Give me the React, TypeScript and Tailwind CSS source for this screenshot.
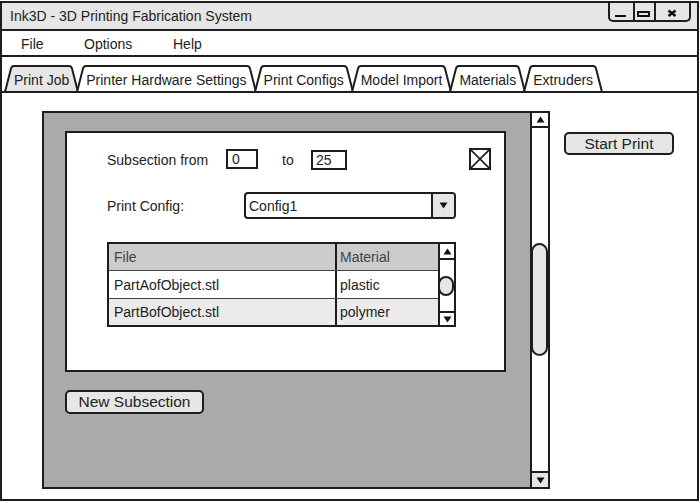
import React from 'react';

function Tab({ label, active, first }: { label: string; active?: boolean; first?: boolean }) {
  const fill = active ? '#e6e6e6' : '#ffffff';
  return (
    <div className={`flex h-[26px] ${first ? '' : '-ml-[3px]'}`}>
      <svg width="10" height="26" viewBox="0 0 10 26" className="shrink-0">
        <path d="M1 27 L7 3.5 Q7.8 1 10 1 L10 26 Z" fill={fill} />
        <path d="M1 27 L7 3.5 Q7.8 1 10 1" fill="none" stroke="#1d1d1d" strokeWidth="2" />
      </svg>
      <div
        className={`flex items-center border-t-2 border-[#1d1d1d] pt-[1px] text-[14px] leading-none ${
          active ? 'bg-[#e6e6e6]' : 'bg-white'
        }`}
      >
        {label}
      </div>
      <svg width="10" height="26" viewBox="0 0 10 26" className="shrink-0">
        <path d="M9 27 L3 3.5 Q2.2 1 0 1 L0 26 Z" fill={fill} />
        <path d="M9 27 L3 3.5 Q2.2 1 0 1" fill="none" stroke="#1d1d1d" strokeWidth="2" />
      </svg>
    </div>
  );
}

function Arrow({ up }: { up?: boolean }) {
  return (
    <svg width="9" height="7" viewBox="0 0 9 7">
      <path d={up ? 'M0.5 6.5 L4.5 0.5 L8.5 6.5 Z' : 'M0.5 0.5 L8.5 0.5 L4.5 6.5 Z'} fill="#111" />
    </svg>
  );
}

export default function App() {
  const tabs = ['Print Job', 'Printer Hardware Settings', 'Print Configs', 'Model Import', 'Materials', 'Extruders'];

  return (
    <div className="w-[700px] h-[503px] overflow-hidden bg-white font-['Liberation_Sans',Arial,sans-serif] text-[#222]">
      <div className="mt-[1px] flex h-[500px] w-[699px] flex-col border-2 border-[#1d1d1d]">
        {/* Title bar */}
        <div className="flex h-[28px] shrink-0 justify-between border-b-2 border-[#1d1d1d] bg-[#e6e6e6]">
          <span className="self-center pl-[8px] text-[14px] leading-none">Ink3D - 3D Printing Fabrication System</span>
          <div className="mr-[6px] flex h-[19px] w-[83px] rounded-b-[5px] border-x-2 border-b-2 border-[#1d1d1d]">
            <div className="w-[23px]">
              <svg width="23" height="17" viewBox="0 0 23 17">
                <rect x="5" y="12" width="11" height="2" fill="#111" />
              </svg>
            </div>
            <div className="w-[21px] border-l-2 border-[#1d1d1d]">
              <svg width="19" height="17" viewBox="0 0 19 17">
                <rect x="3" y="9" width="11" height="4" fill="none" stroke="#111" strokeWidth="2" />
              </svg>
            </div>
            <div className="flex-1 border-l-2 border-[#1d1d1d]">
              <svg width="33" height="17" viewBox="0 0 33 17">
                <path d="M12.5 7.5 L19.5 13 M19.5 7.5 L12.5 13" stroke="#111" strokeWidth="2.6" />
              </svg>
            </div>
          </div>
        </div>

        {/* Menu bar */}
        <div className="flex h-[26px] shrink-0 items-center border-b-2 border-[#1d1d1d] pl-[19px] pt-[1px] text-[14px] leading-none">
          <span className="w-[63px]">File</span>
          <span className="w-[89px]">Options</span>
          <span>Help</span>
        </div>

        {/* Tabs */}
        <div className="flex h-[36px] shrink-0 items-end border-b-2 border-[#1d1d1d] pl-[2px]">
          {tabs.map((t, i) => (
            <Tab key={t} label={t} active={i === 0} first={i === 0} />
          ))}
        </div>

        {/* Content */}
        <div className="flex flex-1 items-start pl-[40px] pt-[18px]">
          <div className="flex h-[378px] w-[508px] border-2 border-[#1d1d1d]">
            <div className="flex-1 bg-[#aaaaaa] pl-[21px] pt-[18px]">
              <div className="h-[241px] w-[441px] border-2 border-[#1d1d1d] bg-white pl-[40px] pt-[15px] text-[14px] leading-none">
                {/* Subsection row */}
                <div className="flex h-[22px] items-center">
                  <span className="w-[119px] pt-[2px]">Subsection from</span>
                  <div className="flex h-[20px] w-[32px] items-center border-2 border-[#1d1d1d] pl-[4px]">0</div>
                  <span className="ml-[24px] w-[29px] pt-[2px]">to</span>
                  <div className="mt-[2px] flex h-[20px] w-[36px] items-center border-2 border-[#1d1d1d] pl-[3px]">25</div>
                  <div className="ml-[122px] h-[22px] w-[22px] border-2 border-[#1d1d1d]">
                    <svg width="18" height="18" viewBox="0 0 18 18">
                      <path d="M0 0 L18 18 M18 0 L0 18" stroke="#1d1d1d" strokeWidth="1.6" />
                    </svg>
                  </div>
                </div>

                {/* Print config row */}
                <div className="mt-[22px] flex items-center">
                  <span className="w-[137px]">Print Config:</span>
                  <div className="flex h-[27px] w-[212px] rounded-[4px] border-2 border-[#1d1d1d]">
                    <span className="flex flex-1 items-center pl-[3px]">Config1</span>
                    <div className="flex w-[23px] items-center justify-center rounded-r-[2px] border-l-2 border-[#1d1d1d] bg-[#e6e6e6]">
                      <Arrow />
                    </div>
                  </div>
                </div>

                {/* Files table */}
                <div className="mt-[23px] flex h-[85px] w-[349px] border-2 border-[#1d1d1d]">
                  <div className="flex flex-1 flex-col">
                    <div className="flex h-[26px] bg-[#cccccc] text-[#444]">
                      <span className="flex w-[228px] items-center border-r-2 border-[#1d1d1d] pl-[5px]">File</span>
                      <span className="flex items-center pl-[3px]">Material</span>
                    </div>
                    <div className="flex h-[28px] border-t border-[#444] bg-white">
                      <span className="flex w-[228px] items-center border-r-2 border-[#1d1d1d] pl-[5px]">PartAofObject.stl</span>
                      <span className="flex items-center pl-[3px]">plastic</span>
                    </div>
                    <div className="flex flex-1 border-t border-[#444] bg-[#ebebeb]">
                      <span className="flex w-[228px] items-center border-r-2 border-[#1d1d1d] pl-[5px]">PartBofObject.stl</span>
                      <span className="flex items-center pl-[3px]">polymer</span>
                    </div>
                  </div>
                  <div className="flex w-[16px] flex-col border-l-2 border-[#1d1d1d] bg-white">
                    <div className="flex h-[16px] items-center justify-center border-b-2 border-[#1d1d1d]">
                      <Arrow up />
                    </div>
                    <div className="-ml-[2px] mt-[16px] h-[20px] w-[16px] rounded-full border-2 border-[#1d1d1d] bg-[#e6e6e6]" />
                    <div className="flex-1" />
                    <div className="flex h-[14px] items-center justify-center border-t-2 border-[#1d1d1d]">
                      <Arrow />
                    </div>
                  </div>
                </div>
              </div>

              <button className="mt-[18px] flex h-[24px] w-[139px] items-center justify-center rounded-[5px] border-2 border-[#1d1d1d] bg-[#e6e6e6] text-[15.5px] leading-none text-[#222]">
                New Subsection
              </button>
            </div>

            {/* Scrollbar */}
            <div className="flex w-[18px] flex-col border-l-2 border-[#1d1d1d] bg-white">
              <div className="flex h-[15px] items-center justify-center border-b-2 border-[#1d1d1d]">
                <Arrow up />
              </div>
              <div className="-ml-[1px] mt-[115px] h-[113px] w-[17px] rounded-full border-2 border-[#1d1d1d] bg-[#e6e6e6]" />
              <div className="flex-1" />
              <div className="flex h-[16px] items-center justify-center border-t-2 border-[#1d1d1d] bg-[#e6e6e6]">
                <Arrow />
              </div>
            </div>
          </div>

          <button className="ml-[14px] mt-[21px] flex h-[23px] w-[110px] items-center justify-center rounded-[5px] border-2 border-[#1d1d1d] bg-[#e6e6e6] text-[15.5px] leading-none text-[#222]">
            Start Print
          </button>
        </div>
      </div>
    </div>
  );
}
